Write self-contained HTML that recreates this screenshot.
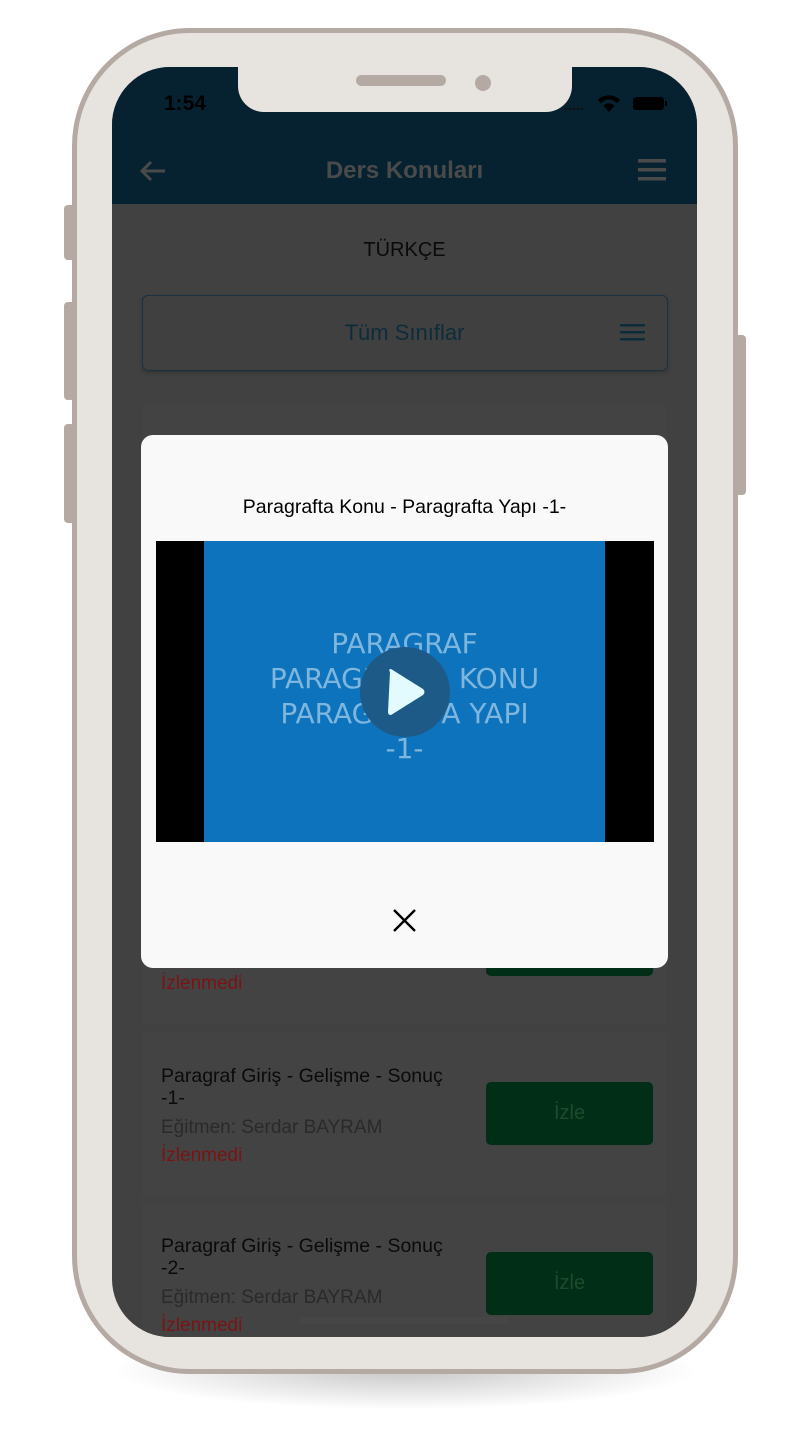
<!DOCTYPE html>
<html><head><meta charset="utf-8"><style>
*{margin:0;padding:0;box-sizing:border-box}
body{width:810px;height:1440px;background:#fff;position:relative;overflow:hidden;font-family:"Liberation Sans",sans-serif}
.abs{position:absolute}
.shadow{left:110px;top:1330px;width:590px;height:80px;border-radius:50%;background:radial-gradient(ellipse at center,rgba(0,0,0,.22),rgba(0,0,0,0) 70%)}
.btn{background:#b5aaa3;border-radius:4px}
.frame{left:72px;top:28px;width:666px;height:1346px;border-radius:118px;background:#e7e3df;border:5px solid #b5aaa3}
.screen{left:112px;top:67px;width:585px;height:1270px;border-radius:58px;background:#414141;overflow:hidden}
.hdr{left:0;top:0;width:585px;height:137px;background:#062230}
.notch{left:126px;top:-2px;width:334px;height:47px;background:#e7e3df;border-radius:0 0 26px 26px}
.card{left:30px;width:525px;background:#434343;border-radius:3px}
.t{color:#0a0a0a;font-size:19.5px;position:absolute;left:19px}
.g{color:#2a2a2a;font-size:19px;position:absolute;left:19px}
.r{color:#7a1414;font-size:19px;position:absolute;left:19px}
.izle{position:absolute;left:344px;width:167px;height:63px;background:#002e16;border-radius:5px;color:#1f4a2e;font-size:20px;text-align:center;line-height:63px}
</style></head><body>
<div class="abs shadow"></div>
<div class="abs btn" style="left:64px;top:205px;width:12px;height:55px"></div>
<div class="abs btn" style="left:64px;top:302px;width:12px;height:98px"></div>
<div class="abs btn" style="left:64px;top:424px;width:12px;height:99px"></div>
<div class="abs btn" style="left:734px;top:335px;width:12px;height:160px"></div>
<div class="abs frame"></div>
<div class="abs screen">
  <div class="abs hdr"></div>
  <div class="abs" style="left:52px;top:25px;font-size:21px;font-weight:bold;color:#000">1:54</div>
  <svg class="abs" style="left:452px;top:27px" width="106" height="20"><g fill="#111"><circle cx="2" cy="15" r="1.2"/><circle cx="6" cy="15" r="1.2"/><circle cx="10" cy="15" r="1.2"/><circle cx="14" cy="15" r="1.2"/><circle cx="18" cy="15" r="1.2"/></g><path d="M34 6 A15 15 0 0 1 56 6 L53 9.5 A10 10 0 0 0 37 9.5Z M39.5 12 A7 7 0 0 1 50.5 12 L45 18Z" fill="#000"/><rect x="69" y="3" width="31" height="13" rx="3" fill="#000"/><rect x="101" y="7" width="2" height="5" fill="#000"/></svg>
  <div class="abs notch"></div>
  <div class="abs" style="left:244px;top:8px;width:90px;height:11px;border-radius:6px;background:#b5aaa3"></div>
  <div class="abs" style="left:363px;top:8px;width:16px;height:16px;border-radius:50%;background:#b5aaa3"></div>
  <svg class="abs" style="left:26px;top:92px" width="30" height="24"><path d="M27 12H4M13 3L4 12l9 9" stroke="#4a4a4a" stroke-width="3" fill="none"/></svg>
  <div class="abs" style="left:0;width:585px;top:90px;text-align:center;font-size:24px;font-weight:bold;color:#4a4a4a">Ders Konuları</div>
  <svg class="abs" style="left:526px;top:92px" width="28" height="24"><g fill="#4a4a4a"><rect y="0" width="28" height="3.5"/><rect y="9" width="28" height="3.5"/><rect y="18" width="28" height="3.5"/></g></svg>
  <div class="abs" style="left:0;width:585px;top:172px;text-align:center;font-size:20px;color:#0a0a0a">TÜRKÇE</div>
  <div class="abs" style="left:30px;top:228px;width:526px;height:76px;background:#404040;border:1px solid #1a3140;border-radius:6px;box-shadow:0 2px 4px rgba(0,0,0,.2)"></div>
  <div class="abs" style="left:0;width:585px;top:253px;text-align:center;font-size:22px;color:#0d2c3b">Tüm Sınıflar</div>
  <svg class="abs" style="left:508px;top:257px" width="25" height="18"><g fill="#0d2c3b"><rect y="0" width="25" height="2.5"/><rect y="7" width="25" height="2.5"/><rect y="14" width="25" height="2.5"/></g></svg>
  <div class="abs card" style="top:338px;height:620px">
    <div class="r" style="top:568px">İzlenmedi</div>
    <div class="izle" style="top:508px"></div>
  </div>
  <div class="abs card" style="top:966px;height:164px">
    <div class="t" style="top:32px;line-height:22px">Paragraf Giriş - Gelişme - Sonuç<br>-1-</div>
    <div class="g" style="top:84px">Eğitmen: Serdar BAYRAM</div>
    <div class="r" style="top:112px">İzlenmedi</div>
    <div class="izle" style="top:49px">İzle</div>
  </div>
  <div class="abs card" style="top:1136px;height:170px">
    <div class="t" style="top:32px;line-height:22px">Paragraf Giriş - Gelişme - Sonuç<br>-2-</div>
    <div class="g" style="top:84px">Eğitmen: Serdar BAYRAM</div>
    <div class="r" style="top:112px">İzlenmedi</div>
    <div class="izle" style="top:49px">İzle</div>
  </div>
  <div class="abs" style="left:188px;top:1250px;width:208px;height:7px;border-radius:4px;background:#464646"></div>
</div>
<div class="abs" style="left:141px;top:435px;width:527px;height:533px;background:#f9f9f9;border-radius:12px"></div>
<div class="abs" style="left:141px;width:527px;top:496px;text-align:center;font-size:19.5px;color:#000">Paragrafta Konu - Paragrafta Yapı -1-</div>
<div class="abs" style="left:156px;top:541px;width:498px;height:301px;background:#000"></div>
<div class="abs" style="left:204px;top:541px;width:401px;height:301px;background:#0c73bc"></div>
<div class="abs" style="left:204px;width:401px;top:626px;text-align:center;font-size:28px;line-height:35px;color:#7fb6dd;font-family:'DejaVu Sans',sans-serif">PARAGRAF<br>PARAGRAFTA KONU<br>PARAGRAFTA YAPI<br>-1-</div>
<div class="abs" style="left:360px;top:647px;width:90px;height:90px;border-radius:50%;background:#1e5a87"></div>
<svg class="abs" style="left:385px;top:667px" width="45" height="50"><path d="M5 5 Q3 2 6 2 L38 22 Q41 25 38 28 L6 48 Q3 48 3 45Z" fill="#e2fbff"/></svg>
<svg class="abs" style="left:392px;top:908px" width="25" height="25"><path d="M2 2L23 23M23 2L2 23" stroke="#000" stroke-width="2.4"/></svg>
</body></html>
